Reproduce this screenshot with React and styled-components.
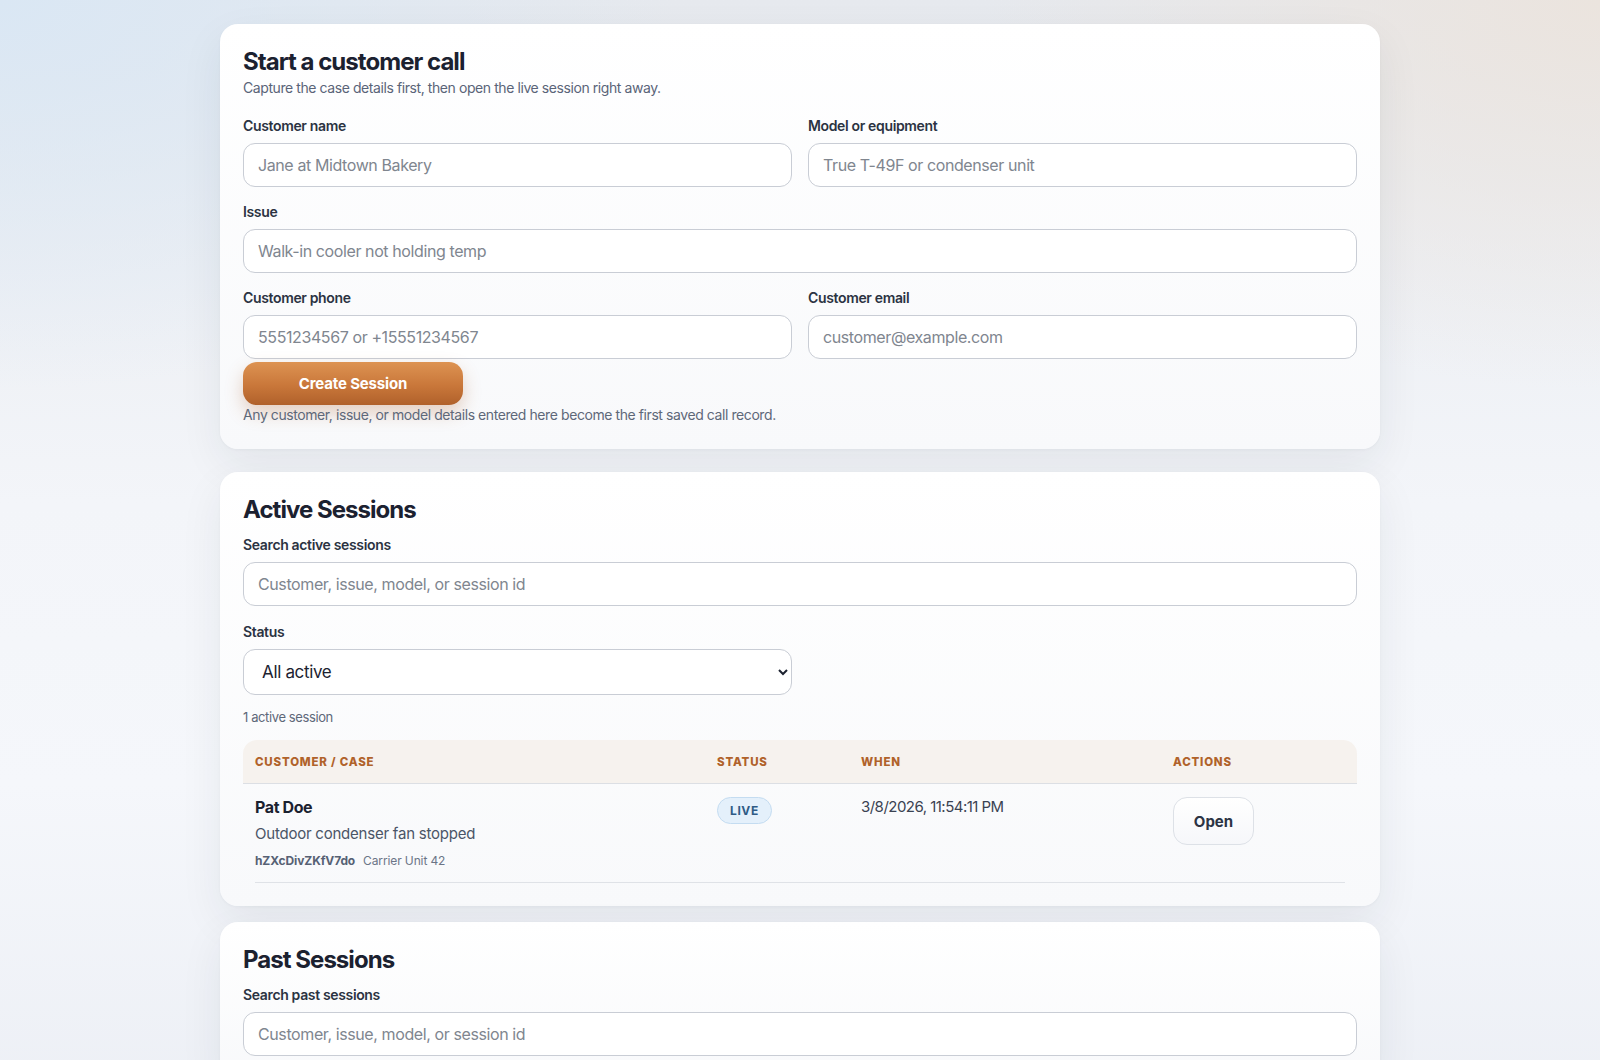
import React from 'react';
import styled, {createGlobalStyle} from "styled-components";

const GlobalStyle = createGlobalStyle`
  html, body {
    margin: 0;
    padding: 0;
  }
  body {
    font-family: 'Inter', 'Noto Sans', sans-serif;
    color: #1c2230;
    min-height: 1060px;
    background:
      radial-gradient(ellipse 900px 520px at 0% 0%, rgba(218, 231, 244, 1), rgba(218, 231, 244, 0) 75%),
      radial-gradient(ellipse 820px 520px at 100% 0%, rgba(235, 228, 222, 1), rgba(235, 228, 222, 0) 75%),
      linear-gradient(180deg, #e6e9ee 0%, #f3f5f9 45%, #f5f7fb 70%, #eceff5 100%);
  }
`

const Page = styled.main`
  width: 1160px;
  margin: 0 auto;
  padding: 24px 0 40px;
  display: flex;
  flex-direction: column;
`

const Card = styled.section`
  background: linear-gradient(180deg, #ffffff 0%, #f8f9fb 100%);
  border-radius: 18px;
  box-shadow: 0 16px 44px rgba(30, 40, 60, 0.07), 0 1px 3px rgba(30, 40, 60, 0.04);
  padding: ${props => props.$pt || 22}px 23px ${props => props.$pb || 24}px;
  margin-bottom: ${props => props.$mb || 0}px;
`

const Title = styled.h2`
  margin: 0;
  font-size: 24px;
  line-height: 31px;
  font-weight: 700;
  letter-spacing: -0.04em;
  color: #1b2130;
`

const Subtitle = styled.p`
  margin: 1px 0 0;
  font-size: 14px;
  line-height: 20px;
  letter-spacing: -0.03em;
  color: #5a6478;
`

const Grid = styled.div`
  display: grid;
  grid-template-columns: ${props => props.$cols || '1fr 1fr'};
  column-gap: 16px;
  row-gap: ${props => props.$gap ?? 16}px;
  margin-top: ${props => props.$mt || 0}px;
`

const Field = styled.label`
  display: flex;
  flex-direction: column;
  gap: 8px;
  grid-column: ${props => props.$wide ? '1 / -1' : 'auto'};
`

const Label = styled.span`
  font-size: 14px;
  line-height: 18px;
  font-weight: 600;
  letter-spacing: -0.025em;
  color: #2b3342;
`

const Input = styled.input`
  box-sizing: border-box;
  height: 44px;
  width: 100%;
  border: 1px solid #c9cdd5;
  border-radius: 12px;
  background: #fff;
  padding: 0 14px;
  font-family: inherit;
  font-size: 16px;
  letter-spacing: -0.025em;
  color: #1c2230;
  outline: none;

  &::placeholder {
    color: #80868f;
  }
`

const Select = styled.select`
  box-sizing: border-box;
  height: 46px;
  width: 100%;
  border: 1px solid #c9cdd5;
  border-radius: 12px;
  background: #fff;
  padding: 0 14px;
  font-family: inherit;
  font-size: 17px;
  letter-spacing: -0.02em;
  color: #1c2230;
`

const PrimaryButton = styled.button`
  align-self: flex-start;
  margin-top: 3px;
  width: 220px;
  height: 43px;
  border: none;
  border-radius: 14px;
  background: linear-gradient(180deg, #dd9352 0%, #c9773a 55%, #b0612b 100%);
  box-shadow: 0 8px 18px rgba(176, 98, 43, 0.28);
  color: #fff;
  font-family: inherit;
  font-size: 15px;
  font-weight: 700;
  letter-spacing: -0.01em;
  cursor: pointer;
`

const Hint = styled.p`
  margin: ${props => props.$mt || 1}px 0 0;
  font-size: ${props => props.$size || 14}px;
  line-height: 18px;
  letter-spacing: -0.03em;
  color: #5e6879;
`

const Form = styled.form`
  display: flex;
  flex-direction: column;
`

const Filters = styled.div`
  display: flex;
  flex-direction: column;
  gap: 17px;
  margin-top: 11px;
`

const Table = styled.div`
  margin-top: 14px;
`

const HeadRow = styled.div`
  display: grid;
  grid-template-columns: 462px 144px 312px 1fr;
  align-items: center;
  height: 43px;
  padding: 0 12px;
  background: #f6f2ee;
  border-radius: 14px 14px 0 0;
  border-bottom: 1px solid #dcdfe4;
`

const HeadCell = styled.span`
  font-size: 11.5px;
  font-weight: 800;
  letter-spacing: 0.07em;
  text-transform: uppercase;
  color: #b0622a;
`

const Row = styled.div`
  display: grid;
  grid-template-columns: 462px 144px 312px 1fr;
  align-items: start;
  margin: 0 12px;
  padding: 12px 0 12px;
  border-bottom: 1px solid #dfe2e7;
`

const CaseName = styled.div`
  font-size: 16px;
  line-height: 22px;
  font-weight: 700;
  letter-spacing: -0.025em;
  color: #1b2130;
`

const CaseIssue = styled.div`
  margin-top: 5px;
  font-size: 15px;
  line-height: 22px;
  letter-spacing: -0.015em;
  color: #4b5567;
`

const CaseMeta = styled.div`
  margin-top: 7px;
  display: flex;
  gap: 8px;
  font-size: 12px;
  line-height: 18px;
  letter-spacing: -0.01em;
  color: #6b7587;
`

const SessionId = styled.span`
  font-weight: 700;
  color: #566174;
`

const Badge = styled.span`
  display: inline-flex;
  align-items: center;
  margin-top: 1px;
  height: 27px;
  padding: 0 12px;
  border-radius: 999px;
  background: #e4f0fb;
  border: 1px solid #c4dcf1;
  box-sizing: border-box;
  font-size: 12px;
  font-weight: 700;
  letter-spacing: 0.05em;
  color: #2f5b86;
`

const When = styled.div`
  font-size: 15px;
  line-height: 22px;
  letter-spacing: -0.035em;
  color: #3a4252;
`

const GhostButton = styled.button`
  margin-top: 1px;
  width: 81px;
  height: 48px;
  border: 1px solid #dde1e7;
  border-radius: 14px;
  background: linear-gradient(180deg, #ffffff 0%, #f6f7fa 100%);
  font-family: inherit;
  font-size: 15px;
  font-weight: 700;
  color: #2c3444;
  cursor: pointer;
`

const sessions = [
    {id: 'hZXcDivZKfV7do', name: 'Pat Doe', issue: 'Outdoor condenser fan stopped', model: 'Carrier Unit 42', status: 'Live', when: '3/8/2026, 11:54:11 PM'}
]

const App = () => {
    return (
        <>
            <GlobalStyle/>
            <Page>
                <Card $mb={23} $pb={25} $pt={22}>
                    <Title>Start a customer call</Title>
                    <Subtitle>Capture the case details first, then open the live session right away.</Subtitle>
                    <Form onSubmit={e => e.preventDefault()}>
                        <Grid $mt={19}>
                            <Field>
                                <Label>Customer name</Label>
                                <Input placeholder="Jane at Midtown Bakery"/>
                            </Field>
                            <Field>
                                <Label>Model or equipment</Label>
                                <Input placeholder="True T-49F or condenser unit"/>
                            </Field>
                            <Field $wide>
                                <Label>Issue</Label>
                                <Input placeholder="Walk-in cooler not holding temp"/>
                            </Field>
                            <Field>
                                <Label>Customer phone</Label>
                                <Input placeholder="5551234567 or +15551234567"/>
                            </Field>
                            <Field>
                                <Label>Customer email</Label>
                                <Input placeholder="customer@example.com"/>
                            </Field>
                        </Grid>
                        <PrimaryButton type="submit">Create Session</PrimaryButton>
                        <Hint>Any customer, issue, or model details entered here become the first saved call record.</Hint>
                    </Form>
                </Card>

                <Card $mb={16} $pb={23}>
                    <Title>Active Sessions</Title>
                    <Filters>
                        <Field>
                            <Label>Search active sessions</Label>
                            <Input placeholder="Customer, issue, model, or session id"/>
                        </Field>
                        <Grid>
                            <Field>
                                <Label>Status</Label>
                                <Select defaultValue="all">
                                    <option value="all">All active</option>
                                    <option value="live">Live</option>
                                    <option value="waiting">Waiting</option>
                                </Select>
                            </Field>
                        </Grid>
                    </Filters>
                    <Hint $mt={13} $size={13}>1 active session</Hint>
                    <Table>
                        <HeadRow>
                            <HeadCell>Customer / Case</HeadCell>
                            <HeadCell>Status</HeadCell>
                            <HeadCell>When</HeadCell>
                            <HeadCell>Actions</HeadCell>
                        </HeadRow>
                        {sessions.map(s => (
                            <Row key={s.id}>
                                <div>
                                    <CaseName>{s.name}</CaseName>
                                    <CaseIssue>{s.issue}</CaseIssue>
                                    <CaseMeta>
                                        <SessionId>{s.id}</SessionId>
                                        <span>{s.model}</span>
                                    </CaseMeta>
                                </div>
                                <div><Badge>{s.status.toUpperCase()}</Badge></div>
                                <When>{s.when}</When>
                                <div><GhostButton>Open</GhostButton></div>
                            </Row>
                        ))}
                    </Table>
                </Card>

                <Card>
                    <Title>Past Sessions</Title>
                    <Filters>
                        <Field>
                            <Label>Search past sessions</Label>
                            <Input placeholder="Customer, issue, model, or session id"/>
                        </Field>
                    </Filters>
                </Card>
            </Page>
        </>
    )
};

export default App;
